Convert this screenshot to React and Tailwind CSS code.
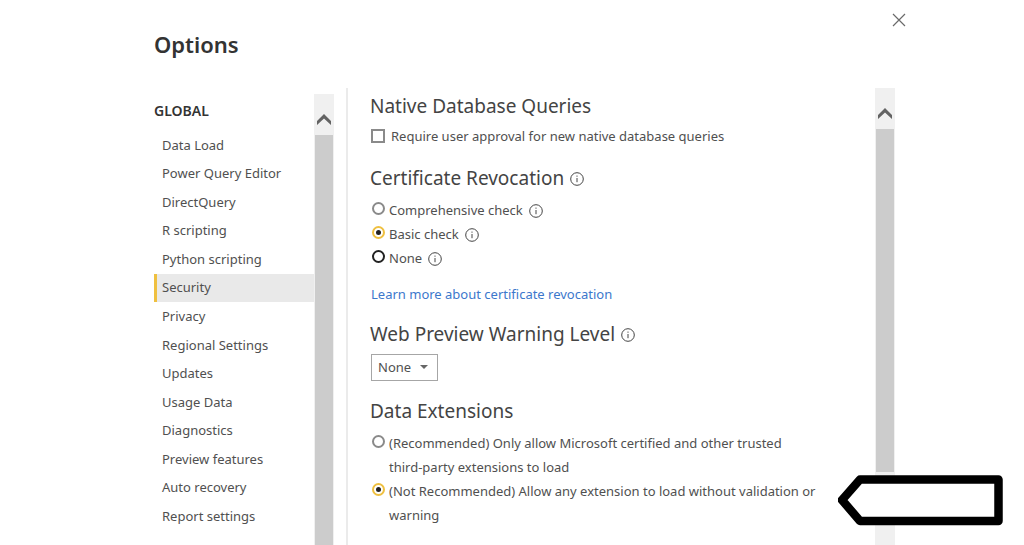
import { useState } from "react";

const navItems = [
  "Data Load",
  "Power Query Editor",
  "DirectQuery",
  "R scripting",
  "Python scripting",
  "Security",
  "Privacy",
  "Regional Settings",
  "Updates",
  "Usage Data",
  "Diagnostics",
  "Preview features",
  "Auto recovery",
  "Report settings",
];

const revocationChecks = [
  { value: "comprehensive", label: "Comprehensive check", border: "border-[#8a8a8a]" },
  { value: "basic", label: "Basic check", border: "border-[#8a8a8a]" },
  { value: "none", label: "None", border: "border-[#222222]" },
];

const extensionLevels = [
  {
    value: "recommended",
    label: (
      <>
        (Recommended) Only allow Microsoft certified and other trusted{" "}
        <span className="whitespace-nowrap">third-party</span> extensions to load
      </>
    ),
  },
  {
    value: "any",
    label: "(Not Recommended) Allow any extension to load without validation or warning",
  },
];

function InfoIcon() {
  return (
    <svg viewBox="0 0 14 14" className="w-3.5 h-3.5 shrink-0" fill="none" aria-hidden="true">
      <circle cx="7" cy="7" r="6.3" stroke="#444444" strokeWidth="1" />
      <path d="M7 6v4.2" stroke="#444444" strokeWidth="1" />
      <circle cx="7" cy="4.1" r="0.7" fill="#444444" />
    </svg>
  );
}

// ── Scrollbar ─────────────────────────────────────────────────
function Scrollbar({ thumb }) {
  return (
    <div className="w-5 shrink-0 flex flex-col bg-[#f0f0f0]" aria-hidden="true">
      <div className="h-[41px] shrink-0 flex items-center justify-center pt-2.5">
        <svg viewBox="0 0 14 11" className="w-3.5 h-[11px]">
          <path d="M7 0L14 7V11L7 4.4L0 11V7Z" fill="#636363" />
        </svg>
      </div>
      <div className={`mx-px bg-[#cccccc] ${thumb}`} />
    </div>
  );
}

function SectionTitle({ children, info }) {
  return (
    <h2 className="flex items-center gap-1.5 text-[19px] leading-7 text-[#444444]">
      {children}
      {info && (
        <span className="pt-0.5">
          <InfoIcon />
        </span>
      )}
    </h2>
  );
}

// ── Radio ─────────────────────────────────────────────────────
function Radio({ id, name, label, checked, onChange, border = "border-[#8a8a8a]", info }) {
  return (
    <div className="flex items-start gap-1 pl-0.5">
      <input
        type="radio"
        id={id}
        name={name}
        checked={checked}
        onChange={onChange}
        className={`appearance-none shrink-0 w-[13px] h-[13px] mt-1 rounded-full border-2 bg-white flex items-center justify-center checked:border-[#efc040] checked:before:w-[5px] checked:before:h-[5px] checked:before:rounded-full checked:before:bg-[#222222] ${border}`}
      />
      <label htmlFor={id} className="leading-6">
        {label}
      </label>
      {info && (
        <span className="h-6 flex items-center pl-0.5 pt-0.5">
          <InfoIcon />
        </span>
      )}
    </div>
  );
}

// ── Dialog ────────────────────────────────────────────────────
export default function App() {
  const [active, setActive] = useState("Security");
  const [approval, setApproval] = useState(false);
  const [check, setCheck] = useState("basic");
  const [level, setLevel] = useState("None");
  const [extension, setExtension] = useState("any");

  return (
    <div className="relative min-h-screen flex flex-col bg-white pl-[154px] font-['Noto_Sans','Open_Sans',sans-serif] text-[13px] text-[#505050]">
      <header className="h-[88px] shrink-0 flex items-start justify-between pr-[118px]">
        <h1 className="pt-7 text-[22px] leading-8 font-semibold text-[#333333]">Options</h1>
        <button type="button" aria-label="Close" className="mt-[13px] w-3.5 h-3.5">
          <svg viewBox="0 0 14 14" className="w-3.5 h-3.5">
            <path d="M1 1L13 13M13 1L1 13" stroke="#6a6a6a" strokeWidth="1.2" />
          </svg>
        </button>
      </header>

      <div className="flex-1 flex pr-[129px]">
        {/* Sidebar */}
        <div className="flex w-[180px] shrink-0 pt-1.5">
          <nav className="flex-1">
            <h3 className="pt-[7px] pb-2.5 text-sm leading-5 font-semibold text-[#333333]">GLOBAL</h3>
            <ul className="grid auto-rows-fr h-[400px]">
              {navItems.map((item) => (
                <li key={item} className="flex">
                  <button
                    type="button"
                    onClick={() => setActive(item)}
                    className={`flex-1 text-left pl-[5px] border-l-3 ${
                      item === active ? "bg-[#e9e9e9] border-[#efc040]" : "border-transparent"
                    }`}
                  >
                    {item}
                  </button>
                </li>
              ))}
            </ul>
          </nav>
          <Scrollbar thumb="flex-1" />
        </div>

        {/* Security settings */}
        <main className="flex-1 ml-3 border-l-2 border-[#ebebeb] pl-[22px] pt-1">
          <section>
            <SectionTitle>Native Database Queries</SectionTitle>
            <div className="mt-1 flex items-center gap-1.5 pl-px leading-6">
              <input
                type="checkbox"
                id="approval"
                checked={approval}
                onChange={(e) => setApproval(e.target.checked)}
                className="appearance-none w-3.5 h-3.5 border-2 border-[#8a8a8a] bg-white checked:bg-[#efc040]"
              />
              <label htmlFor="approval">Require user approval for new native database queries</label>
            </div>
          </section>

          <section className="mt-4">
            <SectionTitle info>Certificate Revocation</SectionTitle>
            <div className="mt-1.5">
              {revocationChecks.map(({ value, label, border }) => (
                <Radio
                  key={value}
                  id={`check-${value}`}
                  name="check"
                  label={label}
                  border={border}
                  checked={check === value}
                  onChange={() => setCheck(value)}
                  info
                />
              ))}
            </div>
            <a href="#revocation" className="mt-3 ml-px block leading-6 text-[#3c78cc]">
              Learn more about certificate revocation
            </a>
          </section>

          <section className="mt-3.5">
            <SectionTitle info>Web Preview Warning Level</SectionTitle>
            <div className="mt-1.5 ml-px relative w-[67px]">
              <select
                aria-label="Web Preview Warning Level"
                value={level}
                onChange={(e) => setLevel(e.target.value)}
                className="appearance-none block w-full h-[27px] pl-1.5 border border-[#a6a6a6] bg-white"
              >
                <option>None</option>
                <option>Moderate</option>
                <option>Strict</option>
              </select>
              <svg viewBox="0 0 8 4" className="absolute right-2.5 top-[11px] w-2 h-1 pointer-events-none">
                <path d="M0 0h8L4 4z" fill="#666666" />
              </svg>
            </div>
          </section>

          <section className="mt-4">
            <SectionTitle>Data Extensions</SectionTitle>
            <div className="mt-1.5 pr-10">
              {extensionLevels.map(({ value, label }) => (
                <Radio
                  key={value}
                  id={`extension-${value}`}
                  name="extension"
                  label={label}
                  checked={extension === value}
                  onChange={() => setExtension(value)}
                />
              ))}
            </div>
          </section>
        </main>
        <Scrollbar thumb="h-3/4" />
      </div>

      {/* Callout arrow pointing at the selected extension level */}
      <svg viewBox="0 0 166 52" className="absolute top-[474px] right-5 w-[166px] h-[52px]" aria-hidden="true">
        <path
          d="M22 5.5H160.5V47H22L4 26Z"
          fill="#ffffff"
          stroke="#000000"
          strokeWidth="8.5"
          strokeLinejoin="round"
        />
      </svg>
    </div>
  );
}
